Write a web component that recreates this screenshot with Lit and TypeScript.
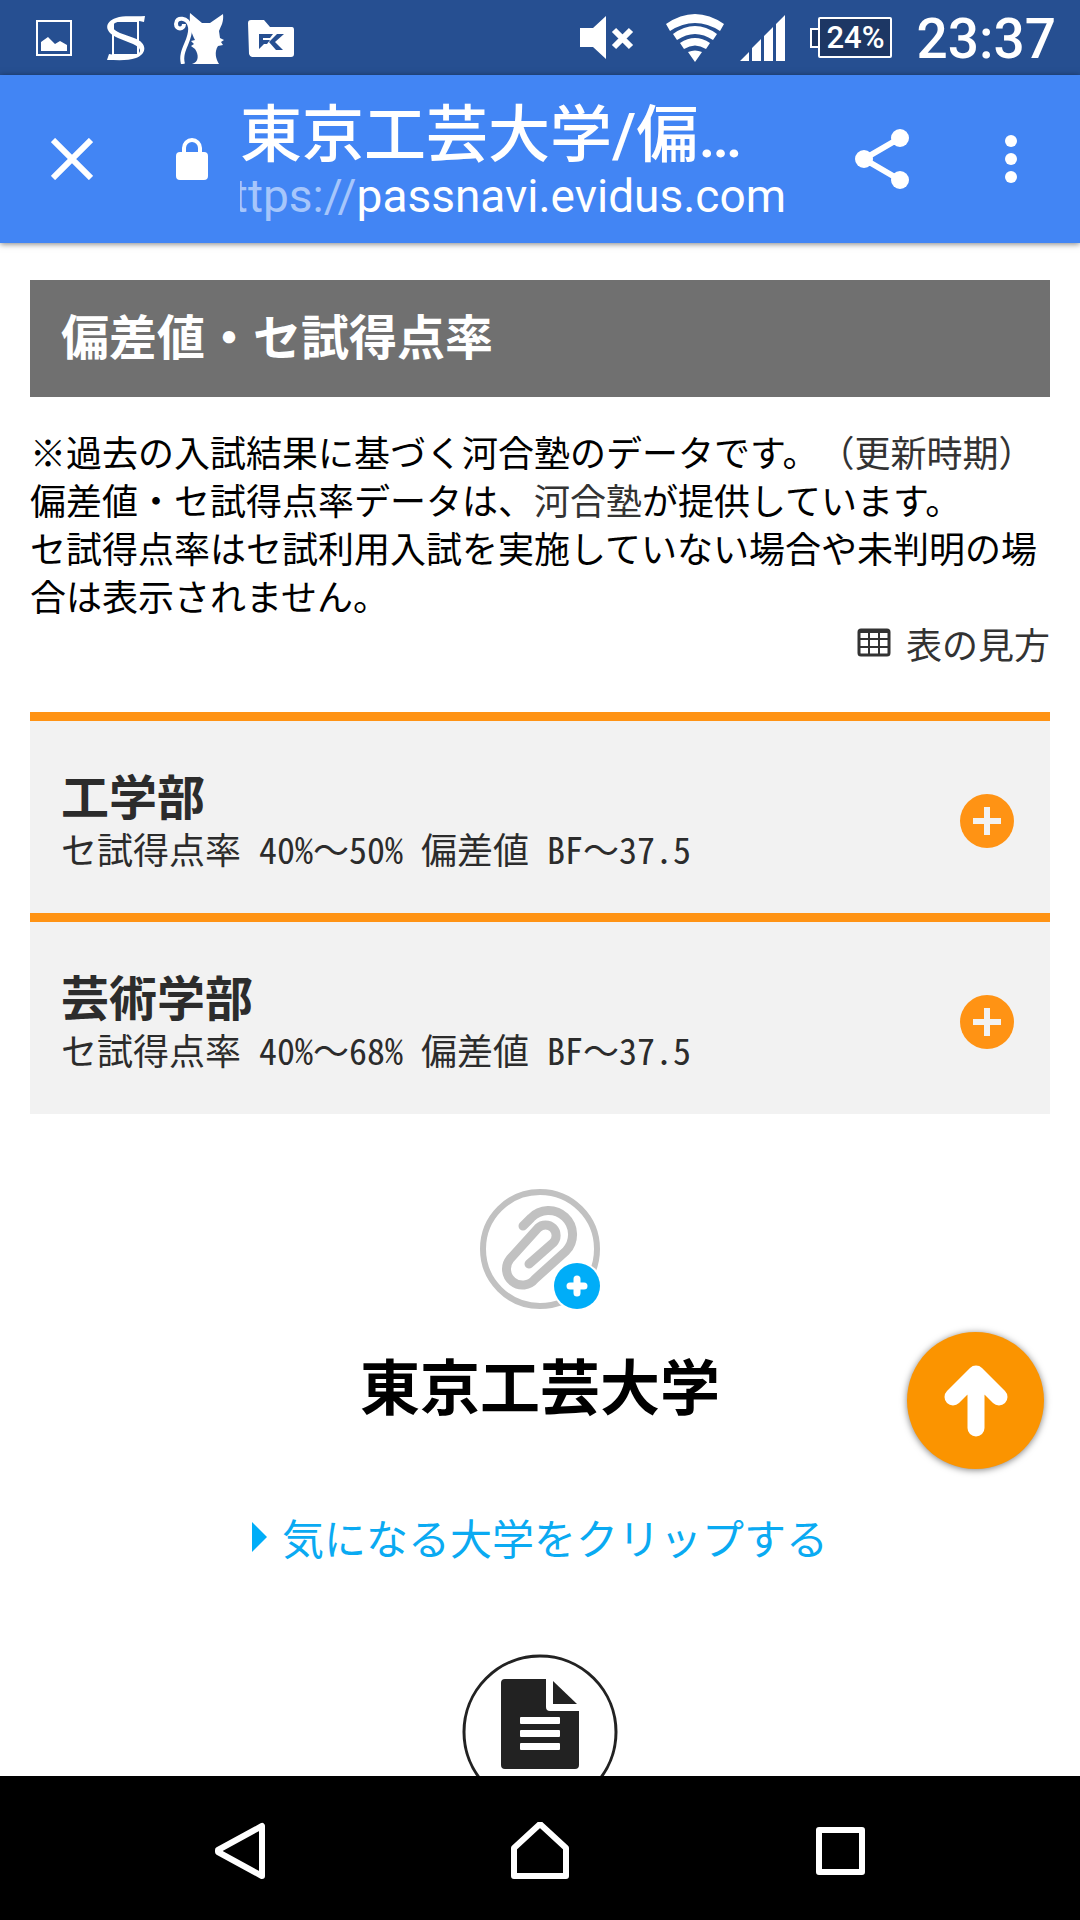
import { LitElement, html, css, svg } from "lit";
import { customElement, property } from "lit/decorators.js";

const plusPath = svg`<path d="M27 13v28M13 27h28" stroke-width="6" />`;

@customElement("status-bar")
class StatusBar extends LitElement {
  static styles = css`
    :host {
      display: flex;
      align-items: center;
      justify-content: space-between;
      height: 75px;
      padding: 0 24px 0 36px;
      background: #264f91;
      color: #fff;
      font-family: Roboto, "Liberation Sans", sans-serif;
      font-weight: 500;
    }
    .group {
      display: flex;
      align-items: center;
    }
    svg {
      display: block;
      flex: none;
      fill: #fff;
    }
    .notes {
      gap: 24px;
    }
    .system {
      gap: 24px;
    }
    .network {
      display: flex;
      align-items: center;
      gap: 16px;
      padding-left: 8px;
    }
    .battery {
      display: flex;
      align-items: center;
    }
    .cap {
      width: 8px;
      height: 20px;
      box-sizing: border-box;
      border: 2px solid #fff;
      border-right: 0;
      background: #1d3764;
    }
    .level {
      box-sizing: border-box;
      width: 74px;
      height: 41px;
      border: 2px solid #fff;
      border-radius: 2px;
      background: #1d3764;
      font-size: 31px;
      line-height: 37px;
      text-align: center;
    }
    .time {
      font-size: 55px;
      line-height: 72px;
      padding-top: 3px;
    }
  `;

  render() {
    return html`
      <div class="group notes">
        <svg width="36" height="52" viewBox="0 0 36 52" aria-hidden="true">
          <path fill-rule="evenodd" d="M0 8h36v36H0zM2 10v32h32V10z" />
          <path d="M5 39V30l7-5 7 7 5-3 7 4v6z" />
        </svg>
        <svg width="52" height="52" viewBox="0 0 52 52" aria-hidden="true">
          <path d="M17 9h25v34H17z" fill="none" stroke="#fff" stroke-width="2" />
          <path
            d="M49 4L48 10C38 8 26 8 19 11C14 14 17 18 24 21L38 26C52 31 51 42 40 46C32 49 22 48 11 48L13 42C24 44 36 45 42 42C46 39 44 35 37 32L22 26C8 20 8 10 20 6C28 3 38 5 49 4z"
          />
        </svg>
        <svg width="52" height="52" viewBox="0 0 52 52" aria-hidden="true">
          <path
            d="M18 1l12 10h8L51 2c1 8-2 12-4 17l1 7 4 2-3 2 2 3-5 1c-4 6-2 13 1 18H20c7-2 7-9 3-15l-4-3 3-2-3-3 4-1c-3-6-6-12-5-28z"
          />
          <path
            d="M11 52C7 38 20 28 18 15C16 5 4 4 4 12C4 18 12 18 12 12"
            fill="none"
            stroke="#fff"
            stroke-width="4"
          />
        </svg>
        <svg width="48" height="52" viewBox="0 0 48 52" aria-hidden="true">
          <path
            d="M3 8h13l6 7h22q2 0 2 3v24q0 3-3 3H4q-2 0-3-3L0 11q0-3 3-3z"
          />
          <path
            d="M11 22h14l-3 4h-7v2h7l-3 4h-3l-5 5zM29 22h7l-9 8 8 8h-7l-7-8z"
            fill="#264f91"
          />
        </svg>
      </div>
      <div class="group system">
        <svg width="54" height="44" viewBox="0 0 54 44" aria-hidden="true">
          <path d="M0 12h13L26 0v43L13 31H0z" />
          <path d="M34 14l17 17M51 14L34 31" stroke="#fff" stroke-width="6" />
        </svg>
        <div class="network">
          <svg width="58" height="48" viewBox="0 0 58 48" aria-hidden="true">
            <path
              d="M0 10Q29-10 58 10L54 17Q29 1 4 17zM7 20Q29 4 51 20L47 26Q29 14 11 26zM14 29Q29 19 44 29L40 35Q29 28 18 35zM22 38Q29 35 36 38L29 48z"
            />
          </svg>
          <svg width="46" height="46" viewBox="0 0 46 46" aria-hidden="true">
            <path d="M0 46l9-9v9zM12 46V33l9-9v22zM24 46V21l9-9v34zM36 46V9l9-9v46z" />
          </svg>
        </div>
        <div class="battery">
          <span class="cap"></span><span class="level">24%</span>
        </div>
        <time class="time">23:37</time>
      </div>
    `;
  }
}

@customElement("browser-bar")
class BrowserBar extends LitElement {
  static styles = css`
    :host {
      display: flex;
      align-items: center;
      height: 168px;
      padding: 0 33px 0 36px;
      box-sizing: border-box;
      background: #4285f4;
      color: #fff;
      box-shadow: 0 1px 6px rgba(0, 0, 0, 0.5);
      position: relative;
      z-index: 1;
      font-family: Roboto, "Noto Sans CJK JP", sans-serif;
    }
    button {
      display: grid;
      place-items: center;
      width: 72px;
      height: 96px;
      padding: 0;
      border: 0;
      background: none;
      flex: none;
    }
    svg {
      display: block;
      flex: none;
      fill: #fff;
    }
    .lock {
      margin: 0 32px 0 68px;
    }
    .page {
      flex: 1;
      min-width: 0;
      padding: 8px 52px 0 0;
    }
    .title {
      font-size: 62px;
      font-weight: 500;
      line-height: 66px;
      height: 66px;
      white-space: nowrap;
    }
    .url {
      display: flex;
      justify-content: flex-end;
      overflow: hidden;
      font-size: 46px;
      line-height: 54px;
      max-width: 546px;
      white-space: nowrap;
    }
    .scheme {
      color: #a6c6fb;
    }
    .more {
      margin-left: 57px;
    }
  `;

  render() {
    return html`
      <button aria-label="閉じる">
        <svg width="42" height="42" viewBox="0 0 42 42">
          <path d="M2 2l38 38M40 2L2 40" stroke="#fff" stroke-width="6" />
        </svg>
      </button>
      <svg class="lock" width="32" height="42" viewBox="0 0 32 42" aria-hidden="true">
        <path
          fill-rule="evenodd"
          d="M4 14h2v-4a10 10 0 0 1 20 0v4h2q4 0 4 4v20q0 4-4 4H4q-4 0-4-4V18q0-4 4-4zm6 0h12v-4a6 6 0 0 0-12 0z"
        />
      </svg>
      <div class="page">
        <div class="title">東京工芸大学/偏…</div>
        <div class="url"><span class="scheme">https://</span><span>passnavi.evidus.com</span></div>
      </div>
      <button aria-label="共有">
        <svg width="54" height="60" viewBox="0 0 54 60">
          <path d="M45 9L9 30l36 21" fill="none" stroke="#fff" stroke-width="6" />
          <circle cx="45" cy="9" r="9" />
          <circle cx="9" cy="30" r="9" />
          <circle cx="45" cy="51" r="9" />
        </svg>
      </button>
      <button class="more" aria-label="メニュー">
        <svg width="12" height="48" viewBox="0 0 12 48">
          <circle cx="6" cy="6" r="6" />
          <circle cx="6" cy="24" r="6" />
          <circle cx="6" cy="42" r="6" />
        </svg>
      </button>
    `;
  }
}

@customElement("faculty-row")
class FacultyRow extends LitElement {
  @property() name = "";
  @property() rate = "";
  @property() deviation = "";

  static styles = css`
    :host {
      display: block;
    }
    button {
      display: flex;
      align-items: center;
      justify-content: space-between;
      width: 100%;
      height: 201px;
      padding: 7px 36px 0 31px;
      border: 0;
      border-top: 9px solid #ff9314;
      background: #f2f2f2;
      color: #2c2c2c;
      font-family: "Noto Sans CJK JP", sans-serif;
      text-align: left;
    }
    .text {
      display: flex;
      flex-direction: column;
    }
    .name {
      font-size: 48px;
      font-weight: 700;
      line-height: 54px;
    }
    .scores {
      font-size: 36px;
      line-height: 54px;
      white-space: pre;
    }
    .half {
      font-feature-settings: "hwid";
    }
    svg {
      display: block;
      flex: none;
    }
  `;

  private half(value: string) {
    return value
      .split("～")
      .map((part, i) => html`${i ? "～" : ""}<span class="half">${part}</span>`);
  }

  render() {
    return html`
      <button aria-expanded="false">
        <span class="text">
          <span class="name">${this.name}</span>
          <span class="scores"
            >セ試得点率<span class="half"> </span>${this.half(this.rate)}<span class="half"> </span>偏差値<span class="half"> </span>${this.half(this.deviation)}</span
          >
        </span>
        <svg width="54" height="54" viewBox="0 0 54 54" aria-hidden="true">
          <circle cx="27" cy="27" r="27" fill="#ff9314" />
          <g stroke="#f2f2f2" fill="none">${plusPath}</g>
        </svg>
      </button>
    `;
  }
}

@customElement("nav-bar")
class NavBar extends LitElement {
  static styles = css`
    :host {
      display: flex;
      justify-content: center;
      gap: 204px;
      height: 144px;
      background: #000;
      align-items: center;
    }
    button {
      display: grid;
      place-items: center;
      width: 96px;
      height: 96px;
      padding: 8px 0 0;
      border: 0;
      background: none;
    }
    svg {
      display: block;
      fill: none;
      stroke: #fff;
      stroke-width: 6;
      stroke-linejoin: round;
    }
  `;

  render() {
    return html`
      <button aria-label="戻る">
        <svg width="50" height="60" viewBox="0 0 50 60"><path d="M47 4v50L3 30V28z" /></svg>
      </button>
      <button aria-label="ホーム">
        <svg width="58" height="60" viewBox="0 0 58 60"><path d="M3 26L29 2l26 24v28H3z" /></svg>
      </button>
      <button aria-label="履歴">
        <svg width="50" height="60" viewBox="0 0 50 60"><path d="M4 8h43v42H4z" /></svg>
      </button>
    `;
  }
}

@customElement("app-root")
class AppRoot extends LitElement {
  static styles = css`
    :host {
      display: flex;
      flex-direction: column;
      height: 100vh;
      overflow: hidden;
      background: #fff;
      color: #000;
      font-family: "Noto Sans CJK JP", sans-serif;
      text-spacing-trim: space-all;
    }
    status-bar,
    browser-bar,
    nav-bar {
      flex: none;
    }
    a {
      color: #333;
      text-decoration: none;
    }
    svg {
      display: block;
      flex: none;
    }
    .content {
      flex: 1;
      min-height: 0;
      overflow: hidden;
      position: relative;
      padding: 37px 30px 0;
    }
    .heading {
      margin: 0;
      padding: 24px 31px 33px;
      background: #707070;
      color: #fff;
      font-size: 48px;
      font-weight: 700;
      line-height: 60px;
    }
    .note {
      margin: 30px 0 0;
      font-size: 36px;
      line-height: 48px;
    }
    .guide {
      display: flex;
      justify-content: flex-end;
      align-items: center;
      gap: 15px;
      font-size: 36px;
      line-height: 48px;
    }
    .list {
      margin-top: 45px;
    }
    .clip {
      display: flex;
      flex-direction: column;
      align-items: center;
      margin-top: 75px;
    }
    .clip button {
      padding: 0;
      border: 0;
      background: none;
    }
    .school {
      margin: 30px 0 0;
      font-size: 60px;
      font-weight: 700;
      line-height: 90px;
    }
    .cliplink {
      display: flex;
      align-items: center;
      gap: 15px;
      margin-top: 78px;
      color: #0aaaf2;
      font-size: 42px;
      line-height: 60px;
    }
    .doc {
      margin-top: 87px;
    }
    .totop {
      position: absolute;
      right: 36px;
      bottom: 307px;
      width: 137px;
      height: 137px;
      padding: 0;
      border: 0;
      border-radius: 50%;
      background: #fb9400;
      box-shadow: 0 1px 7px rgba(0, 0, 0, 0.5);
      display: grid;
      place-items: center;
    }
  `;

  render() {
    return html`
      <status-bar></status-bar>
      <browser-bar></browser-bar>
      <main class="content">
        <h2 class="heading">偏差値・セ試得点率</h2>
        <p class="note">
          ※過去の入試結果に基づく河合塾のデータです。<a href="#update">（更新時期）</a><br />
          偏差値・セ試得点率データは、<a href="#kawai">河合塾</a>が提供しています。<br />
          セ試得点率はセ試利用入試を実施していない場合や未判明の場合は表示されません。
        </p>
        <div class="guide">
          <svg width="34" height="30" viewBox="0 0 34 30" aria-hidden="true">
            <path
              d="M4 2h26q2 0 2 2v21q0 2-2 2H4q-2 0-2-2V4q0-2 2-2z"
              fill="none"
              stroke="#333"
              stroke-width="3"
            />
            <path d="M2 11h30M2 19h30M12 5v22M22 5v22" stroke="#333" stroke-width="2" />
            <path d="M2 1h30v4H2z" fill="#333" />
          </svg>
          <a href="#guide">表の見方</a>
        </div>
        <div class="list">
          <faculty-row name="工学部" rate="40%～50%" deviation="BF～37.5"></faculty-row>
          <faculty-row name="芸術学部" rate="40%～68%" deviation="BF～37.5"></faculty-row>
        </div>
        <section class="clip">
          <button aria-label="クリップ">
            <svg width="120" height="120" viewBox="0 0 120 120">
              <circle cx="60" cy="60" r="57" fill="none" stroke="#c1c1c1" stroke-width="6" />
              <path
                d="M43 37l8-8a24 24 0 0 1 35 33L55 90a15 15 0 0 1-25-20L58 39a10 10 0 0 1 15 15L49 75"
                fill="none"
                stroke="#c1c1c1"
                stroke-width="9"
                stroke-linecap="round"
              />
              <circle cx="97" cy="97" r="25" fill="#fff" />
              <circle cx="97" cy="97" r="23" fill="#00adf8" />
              <path d="M97 90v14M90 97h14" stroke="#fff" stroke-width="7" stroke-linecap="round" />
            </svg>
          </button>
          <h2 class="school">東京工芸大学</h2>
          <a class="cliplink" href="#clip">
            <svg width="15" height="30" viewBox="0 0 15 30" aria-hidden="true">
              <path d="M0 0l15 15L0 30z" fill="#00adf8" />
            </svg>
            気になる大学をクリップする
          </a>
          <svg class="doc" width="156" height="156" viewBox="0 0 156 156" aria-hidden="true">
            <circle cx="78" cy="78" r="76" fill="#fff" stroke="#222" stroke-width="3" />
            <path
              d="M43 25h41v28q0 4 4 4h29v54q0 4-4 4H43q-4 0-4-4V29q0-4 4-4z"
              fill="#222"
            />
            <path d="M91 27l24 23H91z" fill="#222" />
            <g fill="#fff">
              <rect x="58" y="63" width="40" height="7" rx="1" />
              <rect x="58" y="76" width="40" height="7" rx="1" />
              <rect x="58" y="89" width="40" height="7" rx="1" />
            </g>
          </svg>
        </section>
        <button class="totop" aria-label="ページの先頭へ">
          <svg width="64" height="72" viewBox="0 0 64 72">
            <path
              d="M9 32L32 9l23 23M32 12v51"
              fill="none"
              stroke="#fff"
              stroke-width="17"
              stroke-linecap="round"
              stroke-linejoin="round"
            />
          </svg>
        </button>
      </main>
      <nav-bar></nav-bar>
    `;
  }
}
